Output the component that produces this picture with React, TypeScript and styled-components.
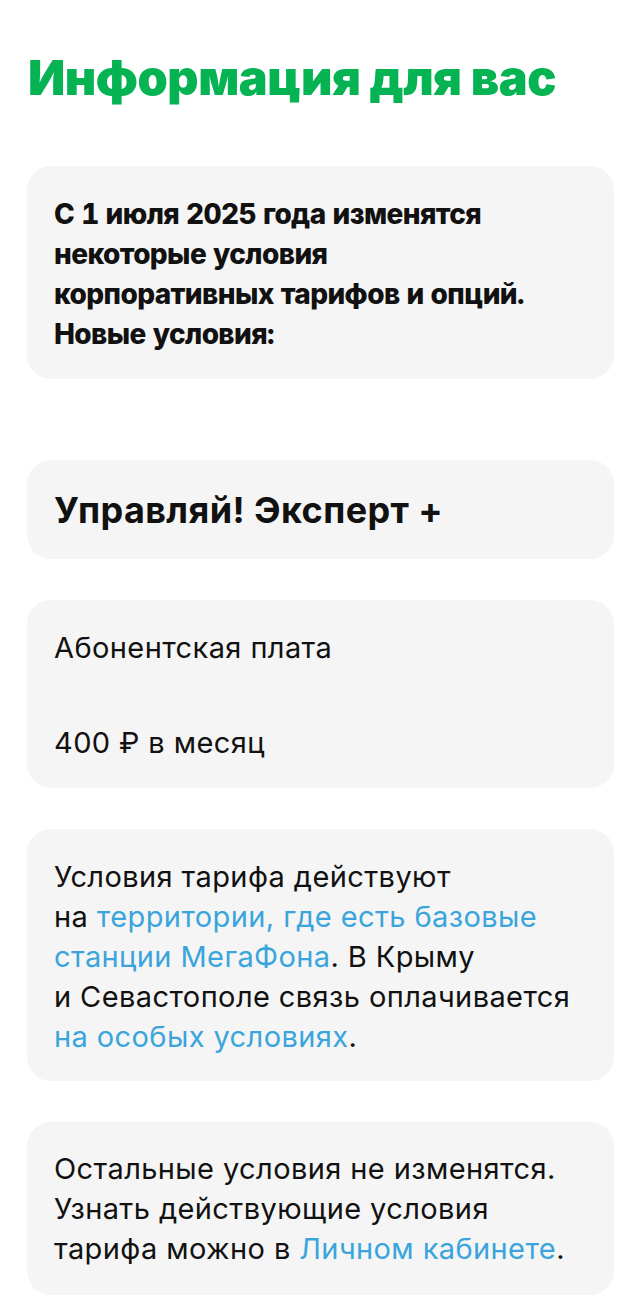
import React from "react";
import styled, { createGlobalStyle } from "styled-components";

const GlobalStyle = createGlobalStyle`
  html, body {
    margin: 0;
    padding: 0;
    background: #ffffff;
  }
  body {
    font-family: Inter, "Liberation Sans", sans-serif;
    color: #111111;
  }
`;

const Page = styled.div`
  display: flex;
  flex-direction: column;
  padding: 48px 26px 14px 27px;
`;

const Title = styled.h1`
  margin: 0 0 58px 1px;
  font-family: Inter, "Liberation Sans", sans-serif;
  font-weight: 900;
  font-size: 48.5px;
  line-height: 60px;
  letter-spacing: -0.5px;
  color: #05b353;
`;

const Card = styled.section<{ $pad?: string; $gap?: number }>`
  background: #f5f5f5;
  border-radius: 24px;
  padding: ${props => props.$pad || "28px 27px 25px"};
  margin-bottom: ${props => props.$gap ?? 41}px;
  display: flex;
  flex-direction: column;
`;

const Lead = styled.p`
  margin: 0;
  font-family: Inter, "Liberation Sans", sans-serif;
  font-weight: 800;
  font-size: 28px;
  line-height: 40px;
  letter-spacing: -0.6px;
  font-variant-numeric: tabular-nums;
  white-space: nowrap;
`;

const TariffName = styled.h2`
  margin: 0;
  font-family: Inter, "Liberation Sans", sans-serif;
  font-weight: 700;
  font-size: 36px;
  line-height: 40px;
  letter-spacing: 0.4px;
  white-space: nowrap;
`;

const Text = styled.p<{ $space?: number }>`
  margin: 0 0 ${props => props.$space || 0}px;
  font-family: Inter, "Liberation Sans", sans-serif;
  font-weight: 400;
  font-size: 29px;
  line-height: 40px;
  letter-spacing: 0.4px;
  white-space: nowrap;
`;

const Link = styled.a`
  color: #3aa5dc;
  text-decoration: none;
`;

export default function App() {
  return (
    <>
      <GlobalStyle />
      <Page>
        <Title>Информация для вас</Title>

        <Card $gap={81}>
          <Lead>
            С 1 июля 2025 года изменятся
            <br />
            некоторые условия
            <br />
            корпоративных тарифов и опций.
            <br />
            Новые условия:
          </Lead>
        </Card>

        <Card $pad="30px 27px 29px">
          <TariffName>Управляй! Эксперт +</TariffName>
        </Card>

        <Card>
          <Text $space={55}>Абонентская плата</Text>
          <Text>400 ₽ в месяц</Text>
        </Card>

        <Card $pad="28px 27px 24px">
          <Text>
            Условия тарифа действуют
            <br />
            на <Link href="#">территории, где есть базовые</Link>
            <br />
            <Link href="#">станции МегаФона</Link>. В Крыму
            <br />
            и Севастополе связь оплачивается
            <br />
            <Link href="#">на особых условиях</Link>.
          </Text>
        </Card>

        <Card $pad="27px 27px 26px" $gap={0}>
          <Text>
            Остальные условия не изменятся.
            <br />
            Узнать действующие условия
            <br />
            тарифа можно в <Link href="#">Личном кабинете</Link>.
          </Text>
        </Card>
      </Page>
    </>
  );
}
